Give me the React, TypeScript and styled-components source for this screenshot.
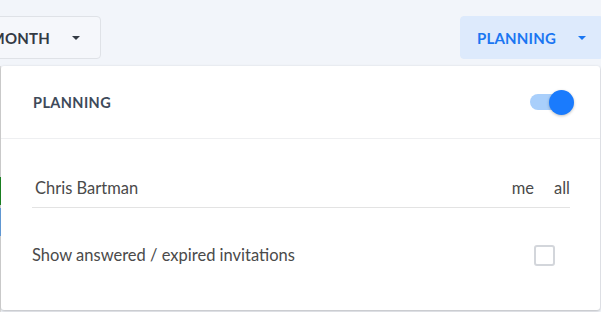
import styled, { createGlobalStyle } from 'styled-components'

const Global = createGlobalStyle`
	html, body {
		margin: 0;
		padding: 0;
		width: 601px;
		height: 312px;
		overflow: hidden;
		background: #f2f5fa;
		font-family: Lato, "Open Sans", sans-serif;
	}
`

const Page = styled.div`
	position: relative;
	width: 601px;
	height: 312px;
	overflow: hidden;
	background: #f2f5fa;
`

const Toolbar = styled.div`
	display: flex;
	justify-content: space-between;
	align-items: flex-start;
	padding-top: 16px;
	height: 42px;
`

const DropButton = styled.button<{ $active?: boolean }>`
	display: flex;
	align-items: center;
	gap: 22px;
	height: 43px;
	box-sizing: border-box;
	padding: 0 20px 0 16px;
	border-radius: 4px;
	border: 1px solid ${(p) => (p.$active ? '#ddeafc' : '#dfe2e7')};
	background: ${(p) => (p.$active ? '#ddeafc' : '#f5f7fb')};
	color: ${(p) => (p.$active ? '#1a76f2' : '#333a44')};
	font-family: inherit;
	font-size: 15px;
	font-weight: 700;
	letter-spacing: 0.2px;
`

const MonthButton = styled(DropButton)`
	margin-left: -40px;
	width: 141px;
	justify-content: flex-end;
`

const PlanButton = styled(DropButton)`
	width: 141px;
	padding-left: 16px;
	border-radius: 4px 0 0 4px;
`

const Caret = styled.span`
	width: 0;
	height: 0;
	border-left: 4px solid transparent;
	border-right: 4px solid transparent;
	border-top: 4px solid currentColor;
`

const SideBars = styled.div`
	position: absolute;
	left: 0;
	top: 66px;
	width: 1px;
	height: 246px;
	background: #dcdcdc;
`

const SideMark = styled.div<{ $color: string; $top: number }>`
	position: absolute;
	left: 0;
	top: ${(p) => p.$top}px;
	width: 1px;
	height: 28px;
	background: ${(p) => p.$color};
`

const Panel = styled.div`
	position: absolute;
	left: 1px;
	top: 66px;
	width: 599px;
	height: 244px;
	background: #fff;
	border-radius: 3px;
	box-shadow: 0 1px 3px rgba(0, 0, 0, 0.25);
`

const Header = styled.div`
	display: flex;
	align-items: center;
	justify-content: space-between;
	height: 72px;
	padding: 0 26px 0 32px;
	border-bottom: 1px solid #eeeff1;
`

const Title = styled.div`
	font-size: 14.5px;
	font-weight: 700;
	color: #3e4a5a;
	letter-spacing: 0.4px;
`

const Switch = styled.div`
	position: relative;
	width: 44px;
	height: 24px;
`

const Track = styled.div`
	position: absolute;
	left: 0;
	top: 4px;
	width: 32px;
	height: 16px;
	border-radius: 8px;
	background: #a9cffb;
`

const Knob = styled.div`
	position: absolute;
	right: 0;
	top: 0;
	width: 25px;
	height: 25px;
	border-radius: 50%;
	background: #1a7bfd;
	box-shadow: 0 1px 3px rgba(0, 0, 0, 0.25);
`

const Body = styled.div`
	padding: 0 30px 0 31px;
`

const UserRow = styled.div`
	display: flex;
	align-items: center;
	justify-content: space-between;
	height: 69px;
	box-sizing: border-box;
	padding: 30px 0 0 3px;
	border-bottom: 1px solid #e3e3e3;
	font-size: 16.5px;
	color: #4a4a4a;
`

const Choices = styled.div`
	display: flex;
	gap: 20px;
`

const OptionRow = styled.div`
	display: flex;
	align-items: center;
	justify-content: space-between;
	height: 90px;
	box-sizing: border-box;
	padding: 4px 15px 0 0;
	font-size: 16.5px;
	color: #4a4a4a;
`

const Check = styled.span`
	width: 17px;
	height: 17px;
	border: 2px solid #d3d6db;
	border-radius: 3px;
`

const App = () => (
	<Page>
		<Global />
		<Toolbar>
			<MonthButton>
				MONTH
				<Caret />
			</MonthButton>
			<PlanButton $active>
				PLANNING
				<Caret />
			</PlanButton>
		</Toolbar>
		<SideBars />
		<SideMark $color="#1c8a24" $top={177} />
		<SideMark $color="#6aa6e6" $top={208} />
		<Panel>
			<Header>
				<Title>PLANNING</Title>
				<Switch>
					<Track />
					<Knob />
				</Switch>
			</Header>
			<Body>
				<UserRow>
					<span>Chris Bartman</span>
					<Choices>
						<span>me</span>
						<span>all</span>
					</Choices>
				</UserRow>
				<OptionRow>
					<span>Show answered / expired invitations</span>
					<Check />
				</OptionRow>
			</Body>
		</Panel>
	</Page>
)

export default App
